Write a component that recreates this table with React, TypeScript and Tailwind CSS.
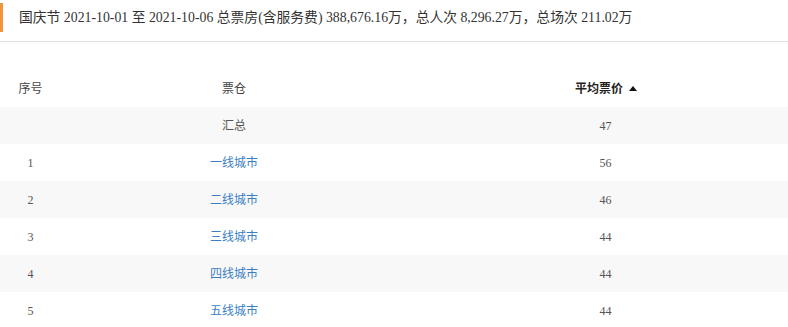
import React from "react";

const rows = [
  { idx: "", name: "汇总", price: "47", link: false },
  { idx: "1", name: "一线城市", price: "56", link: true },
  { idx: "2", name: "二线城市", price: "46", link: true },
  { idx: "3", name: "三线城市", price: "44", link: true },
  { idx: "4", name: "四线城市", price: "44", link: true },
  { idx: "5", name: "五线城市", price: "44", link: true },
];

const serif = { fontFamily: '"Liberation Serif", "Noto Sans CJK SC", serif' };

export default function App() {
  return (
    <div className="w-[788px] h-[327px] overflow-hidden bg-white" style={serif}>
      <div className="border-b border-[#e2e2e2] pt-[3px] pb-[9px]">
        <div className="border-l-[3px] border-[#f0953a] h-[29px] flex items-center pl-4 pt-[1px] text-[13.8px] text-[#333]">
          国庆节 2021-10-01 至 2021-10-06 总票房(含服务费) 388,676.16万，总人次 8,296.27万，总场次 211.02万
        </div>
      </div>
      <div className="mt-[28px] text-[12px]">
        <div className="grid grid-cols-[61px_346px_1fr] h-[37px] items-center">
          <div className="text-center text-[#444]">序号</div>
          <div className="text-center text-[#444]">票仓</div>
          <div className="pl-[17px] font-bold text-[#222] flex items-center justify-center gap-[6px]">
            <span>平均票价</span>
            <svg width="8" height="5" viewBox="0 0 8 5"><path d="M0 5 L4 0 L8 5 Z" fill="#111" /></svg>
          </div>
        </div>
        {rows.map((r, i) => (
          <div
            key={i}
            className={`grid grid-cols-[61px_346px_1fr] h-[37px] items-center text-[#555] ${i % 2 === 0 ? "bg-[#f8f8f8]" : "bg-white"}`}
          >
            <div className="text-center">{r.idx}</div>
            <div className={`text-center ${r.link ? "text-[#3a7ec4]" : "text-[#555]"}`}>{r.name}</div>
            <div className="text-center pl-[16px]">{r.price}</div>
          </div>
        ))}
      </div>
    </div>
  );
}
